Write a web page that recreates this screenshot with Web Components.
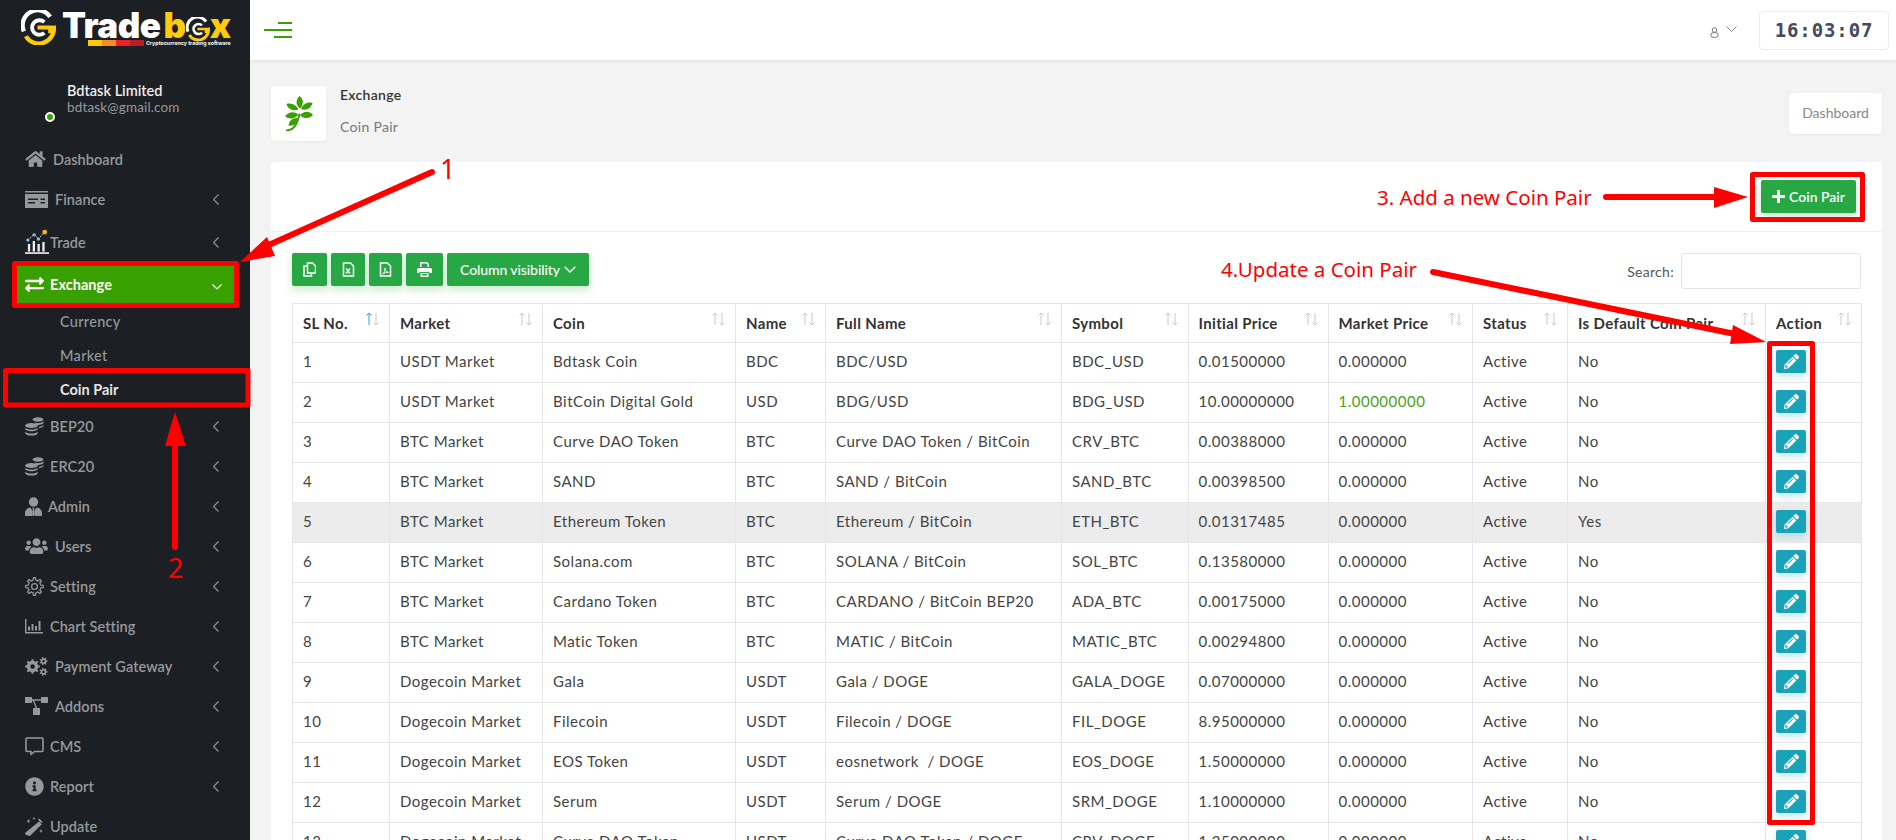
<!DOCTYPE html>
<html lang="en">
<head>
<meta charset="utf-8">
<title>Coin Pair</title>
<style>
    html, body { margin: 0; padding: 0; }
    body {
        width: 1896px;
        height: 840px;
        overflow: hidden;
        position: relative;
        display: flex;
        background: #f3f3f3;
        font-family: Lato, "Noto Sans", sans-serif;
    }
    page-main { flex: 1; min-width: 0; }
</style>
</head>
<body>
<trade-sidebar></trade-sidebar>
<page-main>
    <top-bar></top-bar>
    <page-title heading="Exchange" sub="Coin Pair"></page-title>
    <pair-card></pair-card>
</page-main>
<guide-marks></guide-marks>

<script>
const FONT = 'Lato, "Noto Sans", sans-serif';

function gearPath(cx, cy, r1, r2, teeth) {
    let d = '';
    const step = Math.PI * 2 / teeth;
    for (let i = 0; i < teeth; i++) {
        const a = i * step;
        const pts = [
            [r1, a - step * 0.5], [r1, a - step * 0.27],
            [r2, a - step * 0.16], [r2, a + step * 0.16],
            [r1, a + step * 0.27]
        ];
        pts.forEach(([r, t], j) => {
            const x = (cx + r * Math.cos(t)).toFixed(2);
            const y = (cy + r * Math.sin(t)).toFixed(2);
            d += (i === 0 && j === 0 ? 'M' : 'L') + x + ' ' + y;
        });
    }
    return d + 'Z';
}

const ICONS = {
    home: `<svg width="21" height="18" viewBox="0 0 576 512" fill="currentColor"><path d="M280.37 148.26L96 300.11V464a16 16 0 0 0 16 16l112.06-.29a16 16 0 0 0 15.92-16V368a16 16 0 0 1 16-16h64a16 16 0 0 1 16 16v95.64a16 16 0 0 0 16 16.05L464 480a16 16 0 0 0 16-16V300L295.67 148.26a12.19 12.19 0 0 0-15.3 0zM571.6 251.47L488 182.56V44.05a12 12 0 0 0-12-12h-56a12 12 0 0 0-12 12v72.61L318.47 43a48 48 0 0 0-61 0L4.34 251.47a12 12 0 0 0-1.6 16.9l25.5 31A12 12 0 0 0 45.15 301l235.22-193.74a12.19 12.19 0 0 1 15.3 0L530.9 301a12 12 0 0 0 16.9-1.6l25.5-31a12 12 0 0 0-1.7-16.93z"/></svg>`,
    finance: `<svg width="23" height="17" viewBox="0 0 23 17" fill="currentColor"><rect y="0" width="23" height="1.5"/><path d="M0 3h23v14H0zM3 7.5v1.4h10V7.5zM3 11v1.4h7V11zM15.5 7.5v1.4H20V7.5zM15.5 11v1.4H20V11z" fill-rule="evenodd"/></svg>`,
    trade: `<svg width="26" height="26" viewBox="0 0 26 26"><path d="M0 24.5h25" stroke="#fff" stroke-width="1.6"/><g fill="#eee"><rect x="3" y="15" width="2.4" height="8"/><rect x="8" y="12" width="2.4" height="11"/><rect x="13" y="15" width="2.4" height="8"/><rect x="18" y="13" width="2.4" height="10"/></g><path d="M3 11L9.5 5l4.5 5 6-7.5" fill="none" stroke="#ccc" stroke-width="1" stroke-dasharray="2 1"/><circle cx="3" cy="11" r="1.7" fill="#7ec3e8"/><circle cx="9.5" cy="5.5" r="1.7" fill="#7ec3e8"/><circle cx="14" cy="10" r="1.7" fill="#7ec3e8"/><circle cx="20.5" cy="2.7" r="2.5" fill="#f6b90f"/></svg>`,
    exchange: `<svg width="19" height="19" viewBox="0 0 512 512" fill="#fff"><path d="M0 168v-16c0-13.255 10.745-24 24-24h360V80c0-21.367 25.899-32.042 40.971-16.971l80 80c9.372 9.373 9.372 24.569 0 33.941l-80 80C409.956 271.982 384 261.456 384 240v-48H24c-13.255 0-24-10.745-24-24zm488 152H128v-48c0-21.314-25.862-32.08-40.971-16.971l-80 80c-9.372 9.373-9.372 24.569 0 33.941l80 80C102.057 463.997 128 453.437 128 432v-48h360c13.255 0 24-10.745 24-24v-16c0-13.255-10.745-24-24-24z"/></svg>`,
    coins: `<svg width="19" height="19" viewBox="0 0 19 19" fill="currentColor"><ellipse cx="13" cy="2.5" rx="5.5" ry="2.2"/><path d="M10 5.6c1 .4 2 .5 3 .5 2.4 0 4.6-.7 5.5-1.8v1.4c0 1.2-2.4 2.3-5.5 2.3-.8 0-1.5-.1-2.2-.2zM14 9.8c2.200-.2 4.100-1 4.500-2v1.300c0 1-1.900 1.900-4.500 2.200z"/><ellipse cx="6.500" cy="8.500" rx="6.300" ry="2.500"/><path d="M.2 10.400c.8 1.300 3.300 2.200 6.300 2.200s5.500-.9 6.300-2.200v1.300c0 1.400-2.800 2.500-6.300 2.500S.2 13.100.2 11.700zM.2 14.400c.8 1.300 3.300 2.200 6.300 2.200s5.500-.9 6.300-2.200v1.500c0 1.500-2.800 2.700-6.300 2.700S.2 17.400.2 15.900z"/></svg>`,
    admin: `<svg width="17" height="19" viewBox="0 0 17 19" fill="currentColor"><circle cx="8.500" cy="5" r="4.700"/><path d="M0 19v-3c0-3 2.200-5 5.500-5.400L7.600 14 7 19zM17 19v-3c0-3-2.200-5-5.500-5.400L9.400 14l.6 5zM7.800 10.600h1.400l.3 1.400-.4.8.7 6.200H7.200l.7-6.200-.4-.8z"/></svg>`,
    users: `<svg width="23" height="18" viewBox="0 0 640 512" fill="currentColor"><path d="M96 224c35.300 0 64-28.700 64-64s-28.700-64-64-64-64 28.700-64 64 28.700 64 64 64zm448 0c35.300 0 64-28.700 64-64s-28.700-64-64-64-64 28.700-64 64 28.700 64 64 64zm32 32h-64c-17.600 0-33.500 7.100-45.100 18.600 40.300 22.100 68.900 62 75.100 109.400h66c17.700 0 32-14.300 32-32v-32c0-35.300-28.700-64-64-64zm-256 0c61.900 0 112-50.100 112-112S381.900 32 320 32 208 82.100 208 144s50.100 112 112 112zm76.800 32h-8.300c-20.800 10-43.900 16-68.500 16s-47.600-6-68.500-16h-8.300C179.600 288 128 339.600 128 403.200V432c0 26.500 21.500 48 48 48h288c26.500 0 48-21.500 48-48v-28.800c0-63.600-51.600-115.200-115.200-115.200zm-223.700-13.400C161.500 263.100 145.600 256 128 256H64c-35.300 0-64 28.700-64 64v32c0 17.700 14.300 32 32 32h65.900c6.300-47.400 34.900-87.300 75.200-109.400z"/></svg>`,
    setting: `<svg width="19" height="19" viewBox="0 0 19 19" fill="none" stroke="currentColor" stroke-width="1.300" stroke-linejoin="round"><path d="${gearPath(9.5, 9.5, 6.4, 8.8, 8)}"/><circle cx="9.500" cy="9.500" r="2.900"/></svg>`,
    chart: `<svg width="18" height="16" viewBox="0 0 18 16" fill="currentColor"><path d="M0 1h1.400v13H18v1.400H0z"/><rect x="3" y="8.500" width="2" height="4"/><rect x="6.500" y="6" width="2" height="6.500"/><rect x="10" y="8" width="2" height="4.500"/><rect x="13.500" y="3" width="2" height="9.500"/></svg>`,
    gears: `<svg width="23" height="19" viewBox="0 0 23 19" fill="currentColor"><path fill-rule="evenodd" d="${gearPath(7.5, 9.5, 5.6, 7.4, 8)}M7.500 7.200a2.300 2.300 0 1 0 .01 0z"/><path fill-rule="evenodd" d="${gearPath(18.5, 4.2, 2.9, 4.100, 7)}M18.500 2.900a1.300 1.300 0 1 0 .01 0z"/><path fill-rule="evenodd" d="${gearPath(18.5, 14.8, 2.9, 4.100, 7)}M18.500 13.500a1.300 1.300 0 1 0 .01 0z"/></svg>`,
    addons: `<svg width="23" height="18" viewBox="0 0 23 18" fill="currentColor"><rect y="0" width="7" height="6" rx=".5"/><rect x="16" y="0" width="7" height="6" rx=".5"/><rect x="8" y="11" width="7" height="7" rx=".5"/><path d="M6 2.300h11v1.400H9.200l3 7.300h-1.500L7.800 3.700H6z"/></svg>`,
    cms: `<svg width="19" height="19" viewBox="0 0 19 19" fill="none" stroke="currentColor" stroke-width="1.600" stroke-linejoin="round"><path d="M2 1h15a1 1 0 0 1 1 1v11.500a1 1 0 0 1-1 1H9.500L6 17.500v-3H2a1 1 0 0 1-1-1V2a1 1 0 0 1 1-1z"/></svg>`,
    info: `<svg width="19" height="19" viewBox="0 0 512 512" fill="currentColor"><path d="M256 8C119.043 8 8 119.083 8 256c0 136.997 111.043 248 248 248s248-111.003 248-248C504 119.083 392.957 8 256 8zm0 110c23.196 0 42 18.804 42 42s-18.804 42-42 42-42-18.804-42-42 18.804-42 42-42zm56 254c0 6.627-5.373 12-12 12h-88c-6.627 0-12-5.373-12-12v-24c0-6.627 5.373-12 12-12h12v-64h-12c-6.627 0-12-5.373-12-12v-24c0-6.627 5.373-12 12-12h64c6.627 0 12 5.373 12 12v100h12c6.627 0 12 5.373 12 12v24z"/></svg>`,
    wand: `<svg width="19" height="19" viewBox="0 0 19 19" fill="currentColor"><path d="M14 4.500l2.800 2.800L5 19 1 18l-1-2z"/><path d="M14.200 1.500l3.300 3.300-1.200 1.200L13 2.700z"/><path d="M3.500 2l.6 1.500 1.500.6-1.500.6-.6 1.500-.6-1.500-1.500-.6 1.500-.6zM9 0l.5 1 1 .5-1 .5L9 3l-.5-1-1-.5 1-.5zM16 12l.6 1.400 1.400.6-1.400.6-.6 1.400-.6-1.400-1.400-.6 1.400-.6z"/></svg>`,
    pencil: `<svg width="15" height="15" viewBox="0 0 512 512" fill="#fff"><path d="M497.900 142.100l-46.100 46.100c-4.700 4.700-12.300 4.700-17 0l-111-111c-4.700-4.700-4.700-12.300 0-17l46.100-46.100c18.700-18.700 49.100-18.700 67.900 0l60.100 60.100c18.800 18.700 18.800 49.100 0 67.900zM284.200 99.800L21.600 362.400.4 483.900c-2.900 16.400 11.400 30.600 27.800 27.800l121.500-21.300 262.600-262.600c4.700-4.700 4.700-12.300 0-17l-111-111c-4.800-4.700-12.400-4.700-17.100 0zM124.100 339.900c-5.500-5.500-5.500-14.300 0-19.800l154-154c5.500-5.500 14.300-5.500 19.800 0s5.500 14.300 0 19.800l-154 154c-5.500 5.500-14.300 5.500-19.800 0zM88 424h48v36.300l-64.500 11.300-31.100-31.100L51.700 376H88v48z"/></svg>`,
    swirl: (s, top) => `<svg width="${s}" height="${s}" viewBox="0 0 36 36" fill="none"><path d="M3 22A15.500 15.500 0 0 1 30 7" stroke="${top}" stroke-width="4.500"/><path d="M33.500 16A15.500 15.500 0 0 1 5 27" stroke="#fccb0b" stroke-width="4.500"/><path d="M24 12.500a7.500 7.500 0 1 0 0 11" stroke="${top}" stroke-width="4"/><path d="M17 18h13v6" stroke="#fccb0b" stroke-width="4"/></svg>`
};

class NavItem extends HTMLElement {
    constructor() {
        super();
        this.attachShadow({ mode: 'open' });
        const icon = ICONS[this.getAttribute('icon')] || '';
        const label = this.getAttribute('label');
        const textX = this.getAttribute('text-x') || 50;
        const h = this.getAttribute('h') || 40;
        const open = this.hasAttribute('open');
        const sub = this.hasAttribute('sub');
        const arrow = this.hasAttribute('arrow');
        this.shadowRoot.innerHTML = `
            <style>
                :host { display: block; }
                .row {
                    height: ${h}px;
                    display: flex;
                    align-items: center;
                    padding-left: 25px;
                    padding-right: 31px;
                    box-sizing: border-box;
                    color: #96999c;
                    font: 600 14.5px ${FONT};
                    letter-spacing: .05px;
                }
                .ic { width: ${textX - 25}px; flex: none; display: flex; align-items: center; }
                .lb { flex: 1; }
                .arrow { display: flex; }
                .open {
                    margin: 0 16px 0 17px;
                    padding: 0 12px 0 8px;
                    background: #38a000;
                    color: #fff;
                    font-weight: 700;
                    box-shadow: 0 0 6px rgba(56,160,0,.3);
                }
                .open .ic { width: 25px; }
                .sub { padding-left: 60px; font-weight: 500; letter-spacing: .3px; }
                .sub.on { color: #e6e6e6; font-weight: 700; letter-spacing: 0; }
                svg { display: block; }
            </style>
            <div class="row ${open ? 'open' : ''} ${sub ? 'sub' : ''} ${this.hasAttribute('on') ? 'on' : ''}">
                ${sub ? '' : `<span class="ic">${icon}</span>`}
                <span class="lb">${label}</span>
                ${open ? `<span class="arrow"><svg width="10" height="6" viewBox="0 0 10 6" fill="none" stroke="#fff" stroke-width="1.100" style="margin-top:6px"><path d="M.5.5L5 5l4.500-4.500"/></svg></span>` : ''}
                ${arrow ? `<span class="arrow"><svg width="6" height="11" viewBox="0 0 6 11" fill="none" stroke="#96999c" stroke-width="1.100"><path d="M5.500.5L.5 5.500l5 5"/></svg></span>` : ''}
            </div>
        `;
    }
}
customElements.define('nav-item', NavItem);

class TradeSidebar extends HTMLElement {
    constructor() {
        super();
        this.attachShadow({ mode: 'open' });
        this.shadowRoot.innerHTML = `
            <style>
                :host {
                    display: block;
                    width: 250px;
                    flex: none;
                    height: 840px;
                    overflow: hidden;
                    background: #1c2025;
                    font-family: ${FONT};
                }
                .logo {
                    height: 83px;
                    box-sizing: border-box;
                    padding: 10px 0 0 21px;
                    display: flex;
                    position: relative;
                }
                .logo svg { flex: none; }
                .word {
                    margin: 0 0 0 6px;
                    font: 900 35px/30px Inter, sans-serif;
                    letter-spacing: -.5px;
                    color: #fff;
                    display: flex;
                    align-items: center;
                    height: 30px;
                }
                .word b { color: #fccb0b; font-weight: 900; margin-left: 3px; }
                .word svg { margin: 7px 0 0 0; }
                .strip {
                    position: absolute;
                    left: 88px;
                    top: 40px;
                    display: flex;
                    align-items: center;
                    height: 6px;
                }
                .strip i { width: 14px; height: 6px; display: block; }
                .strip span {
                    font: 800 5.200px/6px Inter, sans-serif;
                    color: #e8e8e8;
                    margin-left: 2px;
                    white-space: nowrap;
                }
                .user {
                    display: flex;
                    height: 40px;
                    margin: 0 0 16px 45px;
                }
                .dot {
                    width: 6px;
                    height: 6px;
                    border: 2px solid #fff;
                    background: #38a000;
                    border-radius: 50%;
                    align-self: flex-end;
                    margin: 0 12px 1px 0;
                }
                .name { color: #eee; font: 600 14.500px/16px ${FONT}; }
                .mail { color: #96999c; font: 400 13.500px/16px ${FONT}; letter-spacing: .15px; }
            </style>
            <div class="logo">
                ${ICONS.swirl(35, '#fff')}
                <div class="word">Trade<b>b</b>${ICONS.swirl(24, '#fff')}<b style="margin:0">x</b></div>
                <div class="strip">
                    <i style="background:#fdc90d"></i><i style="background:#f68d23"></i><i style="background:#ee2027"></i><i style="background:#b71f24"></i>
                    <span>Cryptocurrency trading software</span>
                </div>
            </div>
            <div class="user">
                <div class="dot"></div>
                <div>
                    <div class="name">Bdtask Limited</div>
                    <div class="mail">bdtask@gmail.com</div>
                </div>
            </div>
            <nav-item icon="home" label="Dashboard" text-x="53"></nav-item>
            <nav-item icon="finance" label="Finance" text-x="55" arrow></nav-item>
            <nav-item icon="trade" label="Trade" h="46" arrow></nav-item>
            <nav-item icon="exchange" label="Exchange" h="38" open></nav-item>
            <div style="height:1px"></div>
            <nav-item label="Currency" h="34" sub></nav-item>
            <nav-item label="Market" h="34" sub></nav-item>
            <nav-item label="Coin Pair" h="34" sub on></nav-item>
            <nav-item icon="coins" label="BEP20" arrow></nav-item>
            <nav-item icon="coins" label="ERC20" arrow></nav-item>
            <nav-item icon="admin" label="Admin" text-x="48" arrow></nav-item>
            <nav-item icon="users" label="Users" text-x="55" arrow></nav-item>
            <nav-item icon="setting" label="Setting" arrow></nav-item>
            <nav-item icon="chart" label="Chart Setting" arrow></nav-item>
            <nav-item icon="gears" label="Payment Gateway" text-x="55" arrow></nav-item>
            <nav-item icon="addons" label="Addons" text-x="55" arrow></nav-item>
            <nav-item icon="cms" label="CMS" arrow></nav-item>
            <nav-item icon="info" label="Report" arrow></nav-item>
            <nav-item icon="wand" label="Update"></nav-item>
        `;
    }
}
customElements.define('trade-sidebar', TradeSidebar);

class TopBar extends HTMLElement {
    constructor() {
        super();
        this.attachShadow({ mode: 'open' });
        this.shadowRoot.innerHTML = `
            <style>
                :host {
                    display: flex;
                    align-items: center;
                    height: 60px;
                    background: #fff;
                    box-shadow: 0 1px 4px rgba(0,0,0,.09);
                    padding: 0 7px 0 14px;
                    position: relative;
                }
                .burger { display: flex; flex-direction: column; align-items: flex-end; gap: 5px; width: 28px; }
                .burger i { display: block; height: 2px; background: #38a000; }
                .me { margin-left: auto; display: flex; align-items: flex-start; gap: 7px; margin-right: 22px; margin-top: 4px; }
                .clock {
                    width: 130px;
                    height: 39px;
                    box-sizing: border-box;
                    border: 1px solid #ececec;
                    border-radius: 4px;
                    display: flex;
                    align-items: center;
                    justify-content: center;
                    color: #444a5c;
                    font: 700 19px "DejaVu Sans Mono", monospace;
                    letter-spacing: .9px;
                }
            </style>
            <div class="burger"><i style="width:14px"></i><i style="width:28px"></i><i style="width:18px"></i></div>
            <div class="me">
                <svg width="9" height="11" viewBox="0 0 9 11" fill="none" stroke="#777" stroke-width="1" style="margin-top:1px"><circle cx="4.500" cy="3" r="2.300"/><ellipse cx="4.500" cy="8" rx="3.800" ry="2.500"/></svg>
                <svg width="11" height="6" viewBox="0 0 11 6" fill="none" stroke="#888" stroke-width="1"><path d="M.5.5l5 5 5-5"/></svg>
            </div>
            <div class="clock">16:03:07</div>
        `;
    }
}
customElements.define('top-bar', TopBar);

class PageTitle extends HTMLElement {
    constructor() {
        super();
        this.attachShadow({ mode: 'open' });
        this.shadowRoot.innerHTML = `
            <style>
                :host {
                    display: flex;
                    align-items: center;
                    height: 55px;
                    margin: 26px 14px 21px 21px;
                    font-family: ${FONT};
                }
                .box {
                    width: 55px;
                    height: 55px;
                    background: #fff;
                    border-radius: 4px;
                    box-shadow: 0 1px 3px rgba(0,0,0,.05);
                    display: flex;
                    align-items: center;
                    justify-content: center;
                }
                .txt { margin-left: 14px; height: 55px; display: flex; flex-direction: column; justify-content: space-between; padding: 0 0 1px; box-sizing: border-box; }
                .t1 { font: 600 14px/18px ${FONT}; color: #333; letter-spacing: .3px; }
                .t2 { font: 400 14px/18px ${FONT}; color: #777; letter-spacing: .3px; margin-bottom: 4px; }
                .dash {
                    margin-left: auto;
                    width: 93px;
                    height: 41px;
                    background: #fff;
                    border-radius: 4px;
                    box-shadow: 0 1px 3px rgba(0,0,0,.05);
                    color: #888;
                    font: 400 14px/39px ${FONT};
                    text-align: center;
                }
                svg { display: block; }
            </style>
            <div class="box">
                <svg width="28" height="35" viewBox="0 0 28 35" fill="#38a000">
                    <path d="M1 34.500c7 0 11.500-4.500 13.500-17" fill="none" stroke="#38a000" stroke-width="1.800"/>
                    <path d="M14.500 0c4 3 4.500 8 .8 12.500C10.500 9.500 10.500 4 14.500 0z"/>
                    <path d="M1.500 8c5-1.500 9.500.5 12 5.500-5 2-10.500 0-12-5.500zM27.500 7c-5-1.500-9.500 1-11.500 6 5 2 10-.5 11.500-6z"/>
                    <path d="M0 20c4-4.500 9-5 13.500-1.500C10 23 4 24 0 20zM28 19c-4-4.500-9.500-4-13 .5 4 3.500 10 3.500 13-.5z"/>
                    <path d="M3.500 29.500c.5-5 4-8 9.500-7.500-.5 5.500-4 8.500-9.500 7.500z"/>
                </svg>
            </div>
            <div class="txt">
                <div class="t1">${this.getAttribute('heading')}</div>
                <div class="t2">${this.getAttribute('sub')}</div>
            </div>
            <div class="dash">Dashboard</div>
        `;
    }
}
customElements.define('page-title', PageTitle);

const COLS = [97, 153, 193, 90, 236, 126.5, 140, 144.5, 95, 198, 96];
const HEADS = ['SL No.', 'Market', 'Coin', 'Name', 'Full Name', 'Symbol', 'Initial Price', 'Market Price', 'Status', 'Is Default Coin Pair', 'Action'];
const ROWS = [
    ['USDT Market', 'Bdtask Coin', 'BDC', 'BDC/USD', 'BDC_USD', '0.01500000', '0.000000'],
    ['USDT Market', 'BitCoin Digital Gold', 'USD', 'BDG/USD', 'BDG_USD', '10.00000000', '1.00000000'],
    ['BTC Market', 'Curve DAO Token', 'BTC', 'Curve DAO Token / BitCoin', 'CRV_BTC', '0.00388000', '0.000000'],
    ['BTC Market', 'SAND', 'BTC', 'SAND / BitCoin', 'SAND_BTC', '0.00398500', '0.000000'],
    ['BTC Market', 'Ethereum Token', 'BTC', 'Ethereum / BitCoin', 'ETH_BTC', '0.01317485', '0.000000'],
    ['BTC Market', 'Solana.com', 'BTC', 'SOLANA / BitCoin', 'SOL_BTC', '0.13580000', '0.000000'],
    ['BTC Market', 'Cardano Token', 'BTC', 'CARDANO / BitCoin BEP20', 'ADA_BTC', '0.00175000', '0.000000'],
    ['BTC Market', 'Matic Token', 'BTC', 'MATIC / BitCoin', 'MATIC_BTC', '0.00294800', '0.000000'],
    ['Dogecoin Market', 'Gala', 'USDT', 'Gala / DOGE', 'GALA_DOGE', '0.07000000', '0.000000'],
    ['Dogecoin Market', 'Filecoin', 'USDT', 'Filecoin / DOGE', 'FIL_DOGE', '8.95000000', '0.000000'],
    ['Dogecoin Market', 'EOS Token', 'USDT', 'eosnetwork  / DOGE', 'EOS_DOGE', '1.50000000', '0.000000'],
    ['Dogecoin Market', 'Serum', 'USDT', 'Serum / DOGE', 'SRM_DOGE', '1.10000000', '0.000000'],
    ['Dogecoin Market', 'Curve DAO Token', 'USDT', 'Curve DAO Token / DOGE', 'CRV_DOGE', '1.25000000', '0.000000']
];

class PairTable extends HTMLElement {
    constructor() {
        super();
        this.attachShadow({ mode: 'open' });
        const sortIcon = (active) => `<svg class="sort" width="14" height="14" viewBox="0 0 14 14" fill="none" stroke-width="1"><path d="M4 13V1M1.500 3.500L4 1l2.500 2.500" stroke="${active ? '#2f9fd8' : '#c9c9c9'}"/><path d="M11 1v12M8.500 10.500L11 13l2.500-2.500" stroke="#c9c9c9"/></svg>`;
        const heads = HEADS.map((h, i) => `<th>${h}${sortIcon(i === 0)}</th>`).join('');
        const rows = ROWS.map((r, i) => `<tr class="${i === 4 ? 'hl' : ''}"><td>${i + 1}</td>${r.map((c, j) => `<td class="${i === 1 && j === 6 ? 'up' : ''}">${c}</td>`).join('')}<td>Active</td><td>${i === 4 ? 'Yes' : 'No'}</td><td class="act"><div class="edit">${ICONS.pencil}</div></td></tr>`).join('');
        this.shadowRoot.innerHTML = `
            <style>
                :host { display: block; font-family: ${FONT}; }
                table { border-collapse: collapse; table-layout: fixed; width: 1569px; }
                th, td {
                    border: 1px solid #e6e6e6;
                    padding: 0 0 0 10px;
                    text-align: left;
                    white-space: pre;
                    box-sizing: border-box;
                }
                th {
                    height: 39px;
                    padding-bottom: 1px;
                    font: 700 15px ${FONT};
                    color: #333;
                    position: relative;
                    letter-spacing: .35px;
                }
                td {
                    height: 40px;
                    padding-bottom: 3px;
                    font: 400 15px ${FONT};
                    color: #444;
                    letter-spacing: .5px;
                }
                .sort { position: absolute; right: 10px; top: 8px; }
                .hl td { background: #ececec; }
                .up { color: #4aa01c; }
                .act { padding-bottom: 0; }
                .edit {
                    width: 30px;
                    height: 23px;
                    background: #1aa3b8;
                    border-radius: 2px;
                    box-shadow: 0 4px 8px rgba(26,163,184,.25);
                    display: flex;
                    align-items: center;
                    justify-content: center;
                    margin-top: -2px;
                }
            </style>
            <table>
                <colgroup>${COLS.map(w => `<col style="width:${w}px">`).join('')}</colgroup>
                <thead><tr>${heads}</tr></thead>
                <tbody>${rows}</tbody>
            </table>
        `;
    }
}
customElements.define('pair-table', PairTable);

class PairCard extends HTMLElement {
    constructor() {
        super();
        this.attachShadow({ mode: 'open' });
        const fileIcon = (mark) => `<svg width="13" height="15" viewBox="0 0 13 15" fill="none" stroke="#fff" stroke-width="1.500"><path d="M1.500 1h7l3 3v10h-10z"/>${mark}</svg>`;
        this.shadowRoot.innerHTML = `
            <style>
                :host {
                    display: block;
                    margin: 0 14px 0 21px;
                    background: #fff;
                    border-radius: 4px 4px 0 0;
                    height: 678px;
                    overflow: hidden;
                    font-family: ${FONT};
                }
                .head {
                    height: 70px;
                    box-sizing: border-box;
                    border-bottom: 1px solid #f0f0f0;
                    display: flex;
                    justify-content: flex-end;
                    align-items: center;
                    padding-right: 26px;
                }
                .btn {
                    height: 33px;
                    background: #28a745;
                    color: #fff;
                    border-radius: 2px;
                    box-shadow: 0 4px 8px rgba(40,167,69,.25);
                    display: flex;
                    align-items: center;
                    justify-content: center;
                    box-sizing: border-box;
                    font: 500 14px ${FONT};
                }
                .add { width: 95px; gap: 4px; font-weight: 600; }
                .body { padding: 21px 21px 0; }
                .tools { display: flex; align-items: flex-start; height: 36px; margin-bottom: 14px; }
                .group { display: flex; gap: 4px; }
                .search { margin-left: auto; display: flex; align-items: center; gap: 7px; color: #555; font: 400 14px ${FONT}; letter-spacing: .3px; }
                .box { width: 180px; height: 36px; box-sizing: border-box; border: 1px solid #e4e4e4; border-radius: 3px; }
                svg { display: block; }
            </style>
            <div class="head">
                <div class="btn add">
                    <svg width="13" height="13" viewBox="0 0 13 13" fill="#fff"><path d="M5 0h3v5h5v3H8v5H5V8H0V5h5z"/></svg>
                    Coin Pair
                </div>
            </div>
            <div class="body">
                <div class="tools">
                    <div class="group">
                        <div class="btn" style="width:35px"><svg width="13" height="15" viewBox="0 0 13 15" fill="none" stroke="#fff" stroke-width="1.500"><path d="M4.500 1h5l3 3v7h-8z"/><path d="M4 4H1v10h7.500v-2.500"/></svg></div>
                        <div class="btn" style="width:34px">${fileIcon('<path d="M4 6.500l4 5M8 6.500l-4 5"/>')}</div>
                        <div class="btn" style="width:33px">${fileIcon('<path d="M3.500 12c2-1 3-4 2.500-6 0 2 1 4 3.500 4.500-2-.3-4 .3-6 1.500z" stroke-width="1"/>')}</div>
                        <div class="btn" style="width:37px"><svg width="15" height="15" viewBox="0 0 15 15" fill="#fff"><path d="M3 0h7l2 2v3h-1.500V2.800L9.500 1.500h-5V5H3z"/><path d="M1.500 6h12A1.500 1.500 0 0 1 15 7.500V11h-2.500v-1h-10v1H0V7.500A1.500 1.500 0 0 1 1.500 6z"/><path d="M3.500 11h8v4h-8zM5 12v1.500h5V12z" fill-rule="evenodd"/></svg></div>
                        <div class="btn" style="width:142px;gap:4px;letter-spacing:-.1px">Column visibility <svg width="12" height="7" viewBox="0 0 12 7" fill="none" stroke="#fff" stroke-width="1.300"><path d="M.7.7L6 6l5.300-5.300"/></svg></div>
                    </div>
                    <div class="search">Search:<div class="box"></div></div>
                </div>
                <pair-table></pair-table>
            </div>
        `;
    }
}
customElements.define('pair-card', PairCard);

// red hand-drawn annotations laid over the screenshot
class GuideMarks extends HTMLElement {
    constructor() {
        super();
        this.attachShadow({ mode: 'open' });
        this.shadowRoot.innerHTML = `
            <style>
                :host { position: absolute; left: 0; top: 0; width: 1896px; height: 840px; pointer-events: none; }
                svg { position: absolute; left: 0; top: 0; }
                span {
                    position: absolute;
                    color: #f00;
                    font: 400 20.500px/28px "Noto Sans", sans-serif;
                    white-space: nowrap;
                    transform: translateY(-50%);
                }
            </style>
            <svg width="1896" height="840" viewBox="0 0 1896 840" fill="none" stroke="#f00" stroke-width="5" stroke-linejoin="round">
                <rect x="14.500" y="263.500" width="222" height="42"/>
                <rect x="5.500" y="370.500" width="242.500" height="34.500"/>
                <rect x="1752.500" y="174.500" width="110" height="45"/>
                <rect x="1769.500" y="343.500" width="43" height="479"/>
                <g stroke-width="6" stroke-linecap="round">
                    <path d="M432 172L262 248"/>
                    <path d="M175 547V445"/>
                    <path d="M1606 197H1716"/>
                    <path d="M1433 272L1735 334"/>
                </g>
                <g fill="#f00" stroke="none">
                    <path d="M240 262L267 237L275 256z"/>
                    <path d="M175 412L186 446H165z"/>
                    <path d="M1748 197L1714 187V208z"/>
                    <path d="M1766 342L1733 325L1730 344z"/>
                </g>
            </svg>
            <span style="left:440px;top:169px;font-size:27px">1</span>
            <span style="left:168px;top:568px;font-size:27px">2</span>
            <span style="left:1377px;top:197px">3. Add a new Coin Pair</span>
            <span style="left:1221px;top:269px">4.Update a Coin Pair</span>
        `;
    }
}
customElements.define('guide-marks', GuideMarks);
</script>
</body>
</html>
